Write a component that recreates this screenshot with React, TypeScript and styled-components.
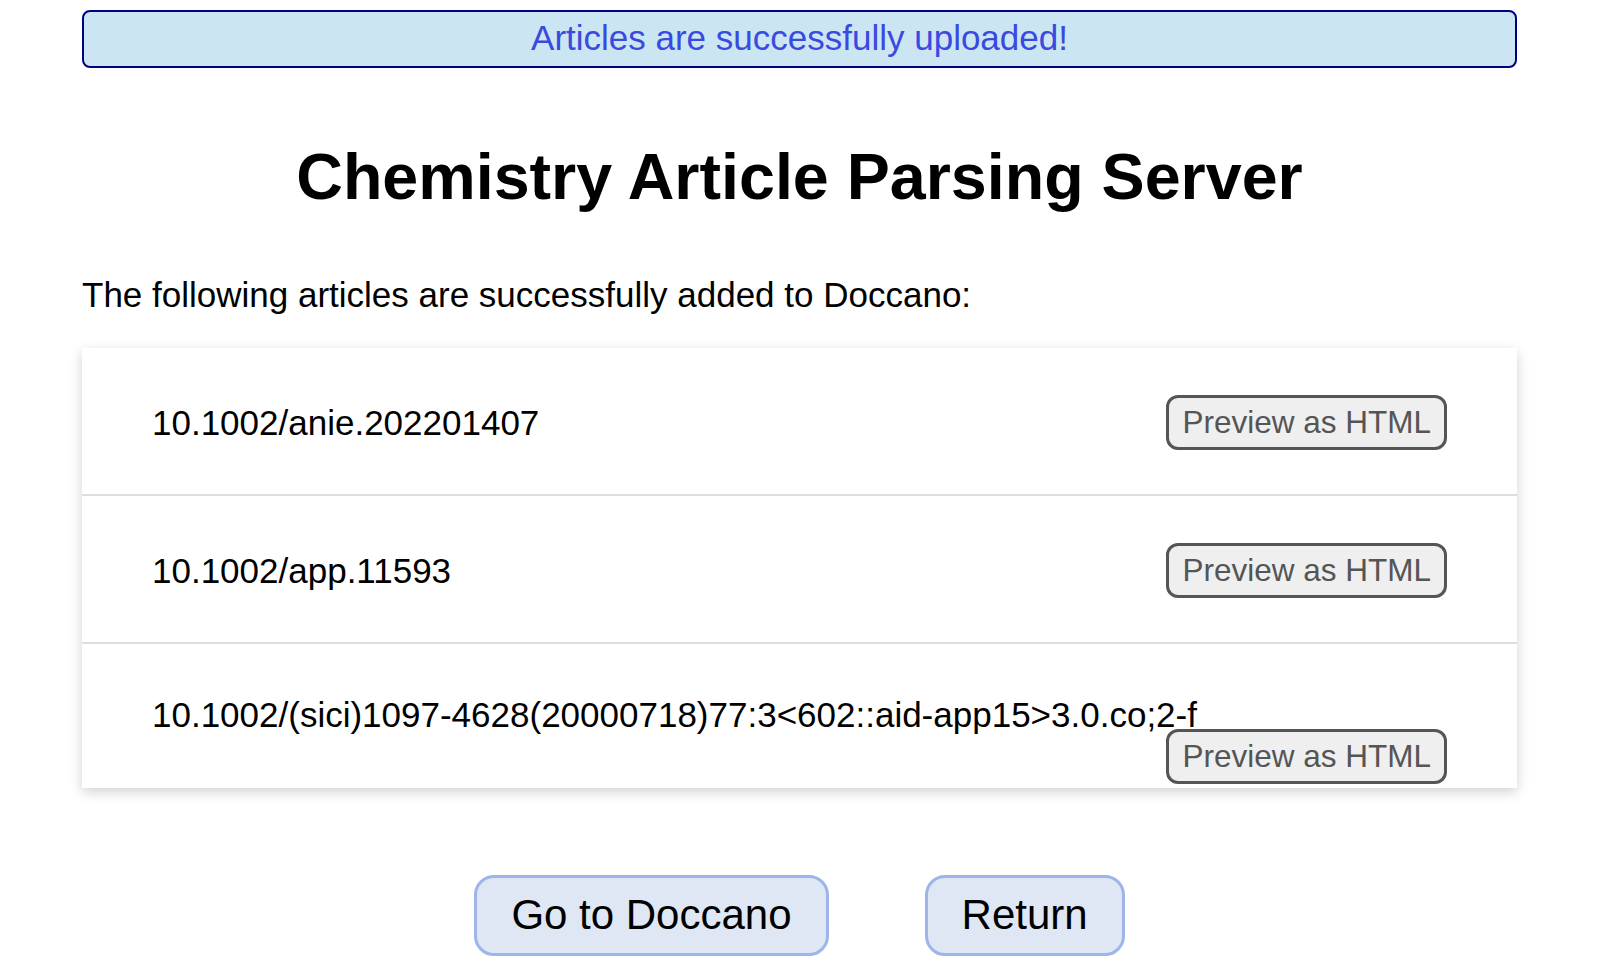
import React from "react";
import styled, { createGlobalStyle } from "styled-components";

const GlobalStyle = createGlobalStyle`
  html, body {
    margin: 0;
    padding: 0;
    background: #ffffff;
    font-family: "Liberation Sans", Arial, sans-serif;
    color: #000000;
  }
`;

const Page = styled.div`
  padding: 10px 93px 0 82px;
  box-sizing: border-box;
  width: 1610px;
`;

const Banner = styled.div`
  border: 2px solid #000080;
  border-radius: 8px;
  background: #cbe6f2;
  color: #3a4ae0;
  font-size: 35px;
  text-align: center;
  padding: 6px 0 8px;
`;

const Title = styled.h1`
  margin: 72px 0 61px;
  font-size: 64.6px;
  font-weight: bold;
  text-align: center;
  line-height: normal;
`;

const Lead = styled.p`
  margin: 0 0 33px;
  font-size: 35px;
`;

const Card = styled.ul`
  list-style: none;
  margin: 0;
  padding: 0;
  background: #ffffff;
  box-shadow: 0 4px 12px rgba(0, 0, 0, 0.18);
`;

const Row = styled.li<{ $first?: boolean; $tall?: boolean; $wrapped?: boolean }>`
  box-sizing: border-box;
  height: ${(p) => (p.$tall ? 148 : 146)}px;
  border-top: ${(p) => (p.$first ? "none" : "2px solid #dddddd")};
  padding: ${(p) => (p.$wrapped ? 56 : 47)}px 70px 0 70px;
  display: flex;
  flex-wrap: wrap;
  align-items: center;
  align-content: flex-start;
`;

const Doi = styled.span`
  font-size: 35px;
  line-height: 29px;
`;

const PreviewButton = styled.button`
  margin-left: auto;
  font-family: "Liberation Sans", Arial, sans-serif;
  font-size: 31.5px;
  color: #555555;
  background: #efefef;
  border: 3px solid #555555;
  border-radius: 12px;
  padding: 6px 13px;
  line-height: normal;
  cursor: pointer;
`;

const Actions = styled.div`
  margin-top: 87px;
  display: flex;
  justify-content: center;
  gap: 96px;
`;

const ActionButton = styled.button`
  font-family: "Liberation Sans", Arial, sans-serif;
  font-size: 42px;
  color: #000000;
  background: #dee7f3;
  border: 3px solid #9db5e8;
  border-radius: 20px;
  padding: 13px 34px 14px;
  line-height: normal;
  cursor: pointer;
`;

const articles = [
  "10.1002/anie.202201407",
  "10.1002/app.11593",
  "10.1002/(sici)1097-4628(20000718)77:3<602::aid-app15>3.0.co;2-f",
];

export default function App() {
  return (
    <>
      <GlobalStyle />
      <Page>
        <Banner>Articles are successfully uploaded!</Banner>
        <Title>Chemistry Article Parsing Server</Title>
        <Lead>The following articles are successfully added to Doccano:</Lead>
        <Card>
          {articles.map((doi, i) => (
            <Row
              key={doi}
              $first={i === 0}
              $tall={i === 1}
              $wrapped={doi.length > 40}
            >
              <Doi>{doi}</Doi>
              <PreviewButton>Preview as HTML</PreviewButton>
            </Row>
          ))}
        </Card>
        <Actions>
          <ActionButton>Go to Doccano</ActionButton>
          <ActionButton>Return</ActionButton>
        </Actions>
      </Page>
    </>
  );
}
